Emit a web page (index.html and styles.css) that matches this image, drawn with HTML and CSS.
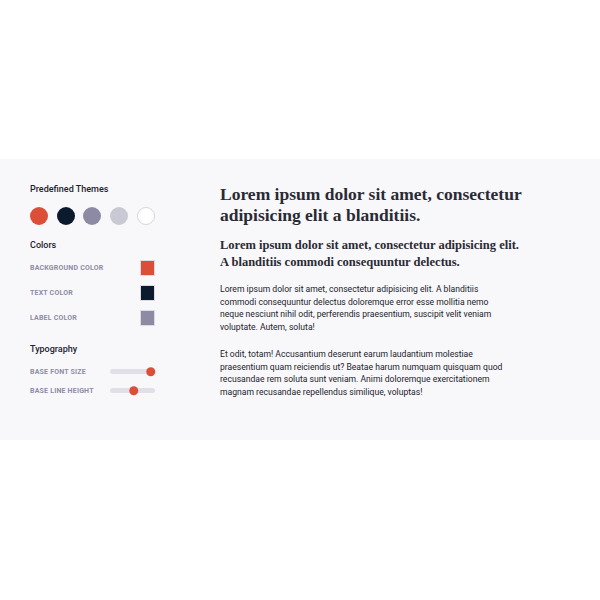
FILE: index.html
```html
<!DOCTYPE html>
<html>
<head>
<meta charset="utf-8">
<link rel="stylesheet" href="styles.css">
</head>
<body>
<div class="panel">
  <aside class="sidebar">
    <h3 class="group-title">Predefined Themes</h3>
    <div class="themes">
      <span class="theme t-red"></span>
      <span class="theme t-navy"></span>
      <span class="theme t-gray"></span>
      <span class="theme t-light"></span>
      <span class="theme t-white"></span>
    </div>
    <h3 class="group-title colors-title">Colors</h3>
    <div class="row"><span class="label">Background color</span><span class="swatch s-red"></span></div>
    <div class="row"><span class="label">Text color</span><span class="swatch s-navy"></span></div>
    <div class="row"><span class="label">Label color</span><span class="swatch s-gray"></span></div>
    <h3 class="group-title typo-title">Typography</h3>
    <div class="slider-row"><span class="label">Base font size</span><span class="track"><span class="thumb" style="left: 91%"></span></span></div>
    <div class="slider-row"><span class="label">Base line height</span><span class="track"><span class="thumb" style="left: 53%"></span></span></div>
  </aside>
  <main class="content">
    <h1 class="title">Lorem ipsum dolor sit amet, consectetur adipisicing elit a blanditiis.</h1>
    <h2 class="subtitle">Lorem ipsum dolor sit amet, consectetur adipisicing elit. A blanditiis commodi consequuntur delectus.</h2>
    <p class="text">Lorem ipsum dolor sit amet, consectetur adipisicing elit. A blanditiis commodi consequuntur delectus doloremque error esse mollitia nemo neque nesciunt nihil odit, perferendis praesentium, suscipit velit veniam voluptate. Autem, soluta!</p>
    <p class="text">Et odit, totam! Accusantium deserunt earum laudantium molestiae praesentium quam reiciendis ut? Beatae harum numquam quisquam quod recusandae rem soluta sunt veniam. Animi doloremque exercitationem magnam recusandae repellendus similique, voluptas!</p>
  </main>
</div>
</body>
</html>
```
FILE: styles.css
```css
html, body {
  margin: 0;
  padding: 0;
  background: #ffffff;
}
body {
  font-family: Roboto, "Liberation Sans", sans-serif;
}
.panel {
  margin-top: 159px;
  height: 281px;
  box-sizing: border-box;
  background: #f8f8fa;
  padding: 25px 30px 0 30px;
  display: flex;
}
.sidebar {
  width: 125px;
  flex: none;
  margin-right: 65px;
}
.group-title {
  margin: 0;
  font-size: 9px;
  font-weight: 500;
  color: #22222c;
  line-height: 10px;
}
.themes {
  display: flex;
  gap: 8.7px;
  margin-top: 13px;
}
.theme {
  width: 18px;
  height: 18px;
  border-radius: 50%;
  box-sizing: border-box;
}
.t-red { background: #db4f38; }
.t-navy { background: #0b1a2c; }
.t-gray { background: #8d8ba3; }
.t-light { background: #c9c8d5; }
.t-white { background: #ffffff; border: 1px solid #d6d5df; }
.colors-title { margin-top: 15px; }
.row {
  display: flex;
  align-items: center;
  justify-content: space-between;
  height: 15.5px;
  margin-top: 9.5px;
}
.colors-title + .row { margin-top: 10px; }
.label {
  font-size: 7px;
  font-weight: 700;
  text-transform: uppercase;
  color: #8e8ca5;
  letter-spacing: 0.2px;
}
.swatch {
  width: 15.5px;
  height: 15.5px;
  box-sizing: border-box;
  border: 1px solid #dcdbe4;
}
.s-red { background: #db4f38; }
.s-navy { background: #0b1a2c; }
.s-gray { background: #8d8ba3; }
.typo-title { margin-top: 18px; }
.slider-row {
  display: flex;
  align-items: center;
  justify-content: space-between;
  height: 10px;
  margin-top: 9px;
}
.typo-title + .slider-row { margin-top: 13px; }
.track {
  position: relative;
  width: 45px;
  height: 5px;
  border-radius: 3px;
  background: #e1e0e8;
}
.thumb {
  position: absolute;
  top: 50%;
  width: 9.5px;
  height: 9.5px;
  border-radius: 50%;
  background: #db4f38;
  transform: translate(-50%, -50%);
}
.content {
  width: 310px;
  flex: none;
}
.title {
  margin: 0;
  font-family: "Liberation Serif", serif;
  font-weight: 700;
  font-size: 17.5px;
  line-height: 21px;
  color: #2a2a34;
}
.subtitle {
  margin: 11px 0 0 0;
  width: 300px;
  font-family: "Liberation Serif", serif;
  font-weight: 700;
  font-size: 12.5px;
  line-height: 17px;
  color: #2a2a34;
}
.text {
  margin: 12px 0 0 0;
  width: 290px;
  font-size: 8.6px;
  line-height: 12.7px;
  color: #22222c;
}
.text + .text { margin-top: 14px; }
```
